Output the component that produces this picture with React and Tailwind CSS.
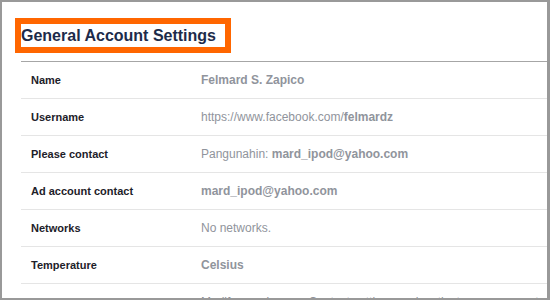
const ROWS = [
  { label: 'Name', value: [{ t: 'Felmard S. Zapico', b: true }] },
  { label: 'Username', value: [{ t: 'https://www.facebook.com/' }, { t: 'felmardz', b: true }] },
  { label: 'Please contact', value: [{ t: 'Pangunahin: ' }, { t: 'mard_ipod@yahoo.com', b: true }] },
  { label: 'Ad account contact', value: [{ t: 'mard_ipod@yahoo.com', b: true }] },
  { label: 'Networks', value: [{ t: 'No networks.' }] },
  { label: 'Temperature', value: [{ t: 'Celsius', b: true }] },
  { label: 'Manage account', value: [{ t: 'Modify your Legacy Contact settings or deactivate your account.' }] },
];

export default function App() {
  return (
    <div
      className="w-[550px] h-[300px] overflow-hidden bg-white border-[#999999] border-t-2 border-l-2 border-b-2 border-r-[3px]"
      style={{ fontFamily: '"Liberation Sans", Arial, sans-serif' }}
    >
      <div className="ml-[13px] mt-[16px] w-[216px] h-[35px] border-[6px] border-[#ff6600] flex items-center">
        <h1 className="text-[16px] leading-none font-bold text-[#1d2b4a] pt-[1px]">General Account Settings</h1>
      </div>

      <div className="ml-[19px] mt-[8px] border-t border-[#a6a6a6]">
        {ROWS.map((row) => (
          <div key={row.label} className="h-[37px] border-b border-[#e5e5e5] flex items-center">
            <div className="w-[180px] pl-[10px] text-[11px] font-bold text-[#1d2129]">{row.label}</div>
            <div className="text-[12px] text-[#90949c] whitespace-nowrap">
              {row.value.map((v, i) => (
                <span key={i} className={v.b ? 'font-bold' : ''}>{v.t}</span>
              ))}
            </div>
          </div>
        ))}
      </div>
    </div>
  );
}
